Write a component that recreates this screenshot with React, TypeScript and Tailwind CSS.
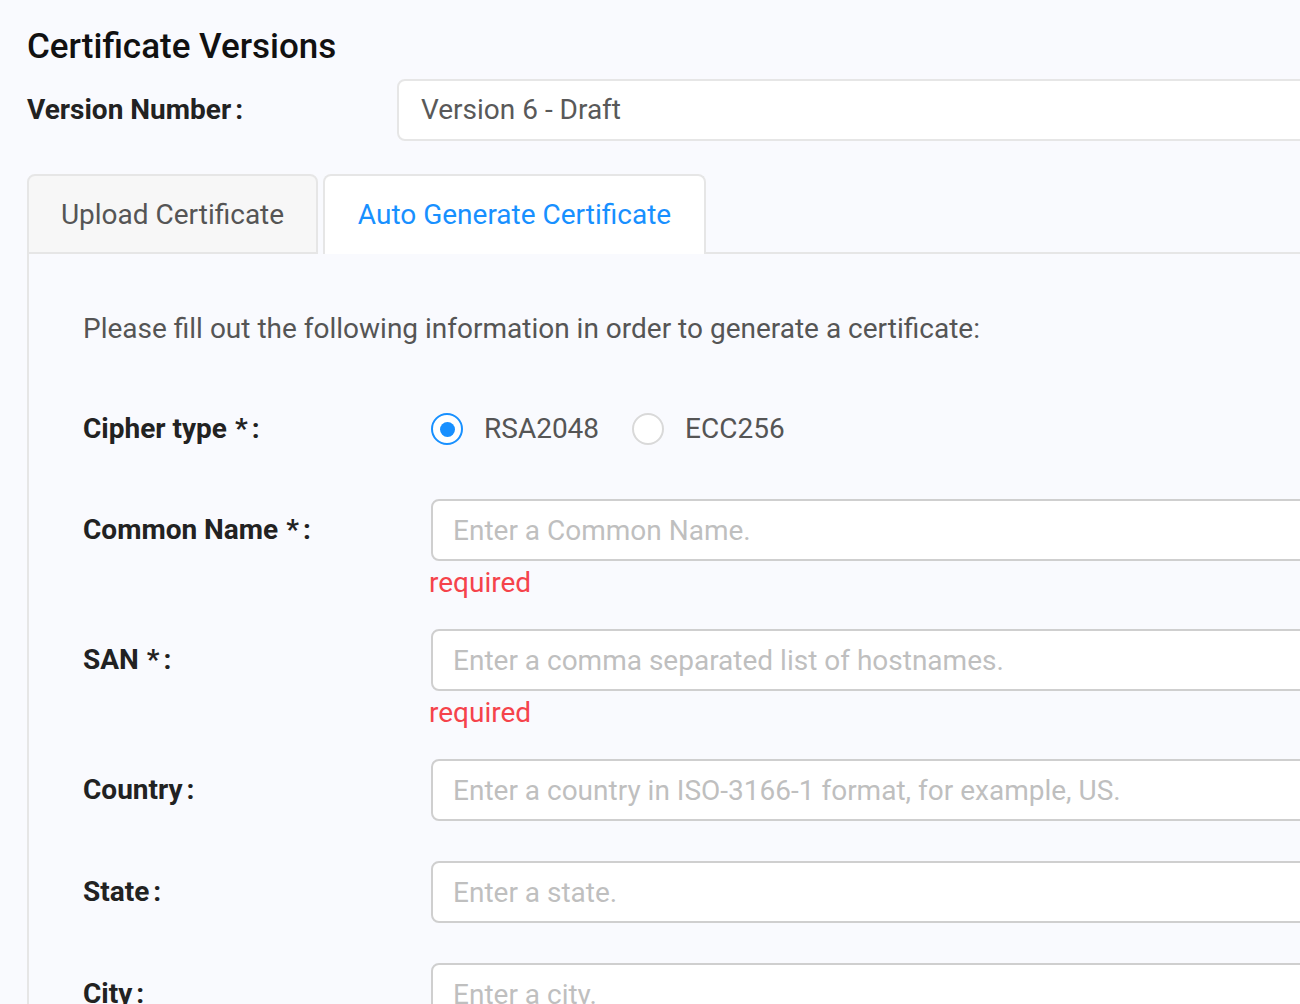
import { useState } from "react";

type Field = {
  label: string;
  required?: boolean;
  placeholder: string;
  error?: string;
};

const fields: Field[] = [
  { label: "Common Name", required: true, placeholder: "Enter a Common Name.", error: "required" },
  { label: "SAN", required: true, placeholder: "Enter a comma separated list of hostnames.", error: "required" },
  { label: "Country", placeholder: "Enter a country in ISO-3166-1 format, for example, US." },
  { label: "State", placeholder: "Enter a state." },
  { label: "City", placeholder: "Enter a city." },
];

function Label({ text, required }: { text: string; required?: boolean }) {
  return (
    <div className="flex h-[62px] w-[348px] shrink-0 items-center text-[28px] font-bold text-[#222]">
      <span>{text}</span>
      {required && <span className="ml-[8px]">*</span>}
      <span className="ml-[4px]">:</span>
    </div>
  );
}

function Radio({ checked, label, onSelect }: { checked: boolean; label: string; onSelect: () => void }) {
  return (
    <button type="button" onClick={onSelect} className="flex items-center">
      <span
        className={
          checked
            ? "flex h-[32px] w-[32px] items-center justify-center rounded-full border-[2px] border-[#1890ff] bg-white"
            : "flex h-[32px] w-[32px] items-center justify-center rounded-full border-[2px] border-[#d9d9d9] bg-white"
        }
      >
        {checked && <span className="h-[15px] w-[15px] rounded-full bg-[#1890ff]" />}
      </span>
      <span className="ml-[21px] mr-[33px] text-[28px] text-[#555]">{label}</span>
    </button>
  );
}

export default function App() {
  const [tab, setTab] = useState<"upload" | "auto">("auto");
  const [cipher, setCipher] = useState("RSA2048");

  return (
    <div className="min-h-[1004px] w-[1300px] overflow-hidden bg-[#f9fafe] pl-[27px] pt-[25px] font-['Roboto',sans-serif]">
      <h1 className="text-[35px] font-medium leading-[44px] text-[#111]">Certificate Versions</h1>

      <div className="mt-[10px] flex items-center">
        <div className="w-[370px] shrink-0 text-[28px] font-bold text-[#222]">
          Version Number<span className="ml-[4px]">:</span>
        </div>
        <div className="flex h-[62px] w-[1000px] shrink-0 items-center rounded-[8px] border-[2px] border-[#e6e6e6] bg-white px-[22px] text-[28px] text-[#595959]">
          Version 6 - Draft
        </div>
      </div>

      <div className="mt-[33px] flex h-[80px] items-stretch">
        <button
          type="button"
          onClick={() => setTab("upload")}
          className={
            tab === "upload"
              ? "w-[291px] rounded-t-[8px] border-[2px] border-b-0 border-[#e6e6e6] bg-white pt-[2px] text-[28px] text-[#1890ff]"
              : "w-[291px] rounded-t-[8px] border-[2px] border-[#e6e6e6] bg-[#f7f7f7] pt-[2px] text-[28px] text-[#555]"
          }
        >
          Upload Certificate
        </button>
        <button
          type="button"
          onClick={() => setTab("auto")}
          className={
            tab === "auto"
              ? "ml-[5px] w-[383px] rounded-t-[8px] border-[2px] border-b-0 border-[#e6e6e6] bg-white text-[28px] text-[#1890ff]"
              : "ml-[5px] w-[383px] rounded-t-[8px] border-[2px] border-[#e6e6e6] bg-[#f7f7f7] text-[28px] text-[#555]"
          }
        >
          Auto Generate Certificate
        </button>
        <div className="flex-1 border-b-[2px] border-[#e6e6e6]" />
      </div>

      <div className="border-l-[2px] border-[#e6e6e6] pl-[54px] pt-[55px]">
        <p className="text-[28px] leading-[40px] text-[#555]">
          Please fill out the following information in order to generate a certificate:
        </p>

        <div className="mt-[49px] flex">
          <Label text="Cipher type" required />
          <div className="flex h-[62px] items-center">
            <Radio checked={cipher === "RSA2048"} label="RSA2048" onSelect={() => setCipher("RSA2048")} />
            <Radio checked={cipher === "ECC256"} label="ECC256" onSelect={() => setCipher("ECC256")} />
          </div>
        </div>

        <div className="mt-[39px] flex flex-col gap-[40px]">
          {fields.map((field) => (
            <div key={field.label} className="flex">
              <Label text={field.label} required={field.required} />
              <div className="flex flex-col">
                <input
                  placeholder={field.placeholder}
                  className="h-[62px] w-[900px] rounded-[8px] border-[2px] border-[#cfcfcf] bg-white px-[20px] text-[28px] text-[#333] outline-none placeholder:text-[#bfbfbf]"
                />
                {field.error && (
                  <div className="-ml-[2px] h-[28px] pt-[8px] text-[28px] leading-[28px] text-[#f5434b]">{field.error}</div>
                )}
              </div>
            </div>
          ))}
        </div>
      </div>
    </div>
  );
}
